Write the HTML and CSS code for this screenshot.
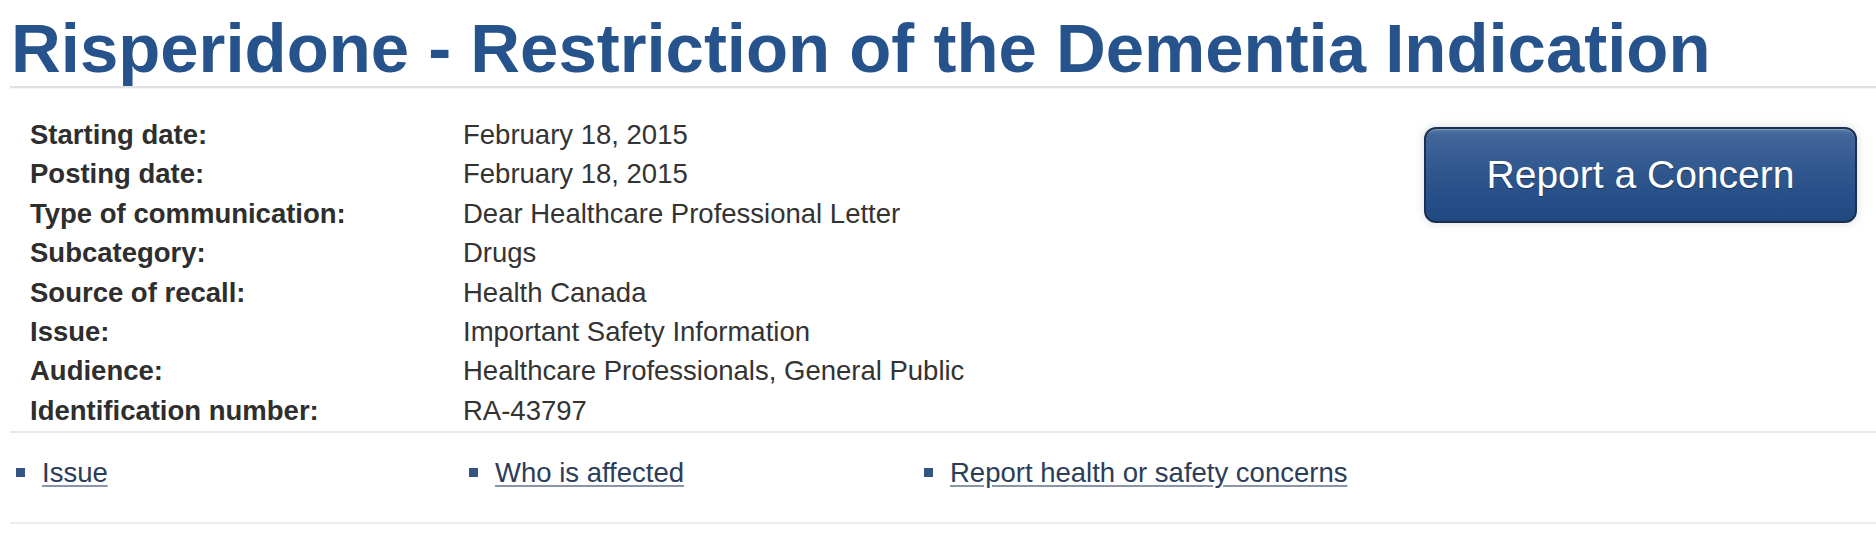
FILE: index.html
```html
<!DOCTYPE html>
<html lang="en">
<head>
<meta charset="utf-8">
<title>Risperidone - Restriction of the Dementia Indication</title>
<link rel="stylesheet" href="styles.css">
</head>
<body>
<main class="page">
  <h1 class="title">Risperidone - Restriction of the Dementia Indication</h1>
  <section class="summary">
    <dl class="details">
      <dt>Starting date:</dt><dd>February 18, 2015</dd>
      <dt>Posting date:</dt><dd>February 18, 2015</dd>
      <dt>Type of communication:</dt><dd>Dear Healthcare Professional Letter</dd>
      <dt>Subcategory:</dt><dd>Drugs</dd>
      <dt>Source of recall:</dt><dd>Health Canada</dd>
      <dt>Issue:</dt><dd>Important Safety Information</dd>
      <dt>Audience:</dt><dd>Healthcare Professionals, General Public</dd>
      <dt>Identification number:</dt><dd>RA-43797</dd>
    </dl>
    <a class="report-btn" href="#">Report a Concern</a>
  </section>
  <nav class="toc">
    <ul class="toc-list">
      <li><a href="#">Issue</a></li>
      <li><a href="#">Who is affected</a></li>
      <li><a href="#">Report health or safety concerns</a></li>
    </ul>
  </nav>
</main>
</body>
</html>
```
FILE: styles.css
```css
html, body {
  margin: 0;
  padding: 0;
  background: #ffffff;
}

body {
  font-family: "Liberation Sans", Arial, Helvetica, sans-serif;
  color: #333333;
}

.page {
  padding: 12px 0 0 10px;
}

.title {
  margin: 0;
  padding-left: 1px;
  font-size: 68.9px;
  line-height: 74px;
  font-weight: 700;
  color: #26538c;
  border-bottom: 2px solid #e1e1e1;
  box-shadow: 0 1px 1px rgba(0, 0, 0, 0.04);
  white-space: nowrap;
}

.summary {
  display: flex;
  justify-content: space-between;
  align-items: flex-start;
  padding: 27px 19px 1px 20px;
  border-bottom: 2px solid #e9e9e9;
}

.details {
  display: grid;
  grid-template-columns: 433px auto;
  margin: 0;
  font-size: 27.5px;
  line-height: 39.4px;
}

.details dt {
  font-weight: 700;
  color: #2e2e2e;
}

.details dd {
  margin: 0;
  color: #333333;
}

.report-btn {
  margin-top: 12px;
  width: 433px;
  height: 96px;
  box-sizing: border-box;
  display: flex;
  align-items: center;
  justify-content: center;
  border: 2px solid #1b2f4e;
  border-radius: 12px;
  background: linear-gradient(to bottom, #5a7dac 0%, #42669a 6%, #30588f 45%, #204881 100%);
  box-shadow: 0 0 10px rgba(40, 50, 70, 0.18), inset 0 1px 0 rgba(255, 255, 255, 0.25);
  color: #ffffff;
  font-size: 39px;
  text-decoration: none;
  text-shadow: 0 1px 1px rgba(0, 0, 0, 0.45);
  white-space: nowrap;
}

.toc {
  padding: 23px 0 33px;
  border-bottom: 2px solid #ececec;
}

.toc-list {
  display: grid;
  grid-template-columns: 453px 455px auto;
  margin: 0;
  padding: 0;
  list-style: none;
  font-size: 27.5px;
  line-height: 33px;
}

.toc-list li {
  display: flex;
  align-items: center;
  padding-left: 6px;
}

.toc-list li::before {
  content: "";
  width: 9px;
  height: 9px;
  margin-right: 17px;
  background: #34557f;
  flex: none;
}

.toc-list a {
  color: #2b3d59;
  text-decoration: underline;
  text-decoration-color: #8a96a8;
  text-underline-offset: 3px;
  white-space: nowrap;
}
```
